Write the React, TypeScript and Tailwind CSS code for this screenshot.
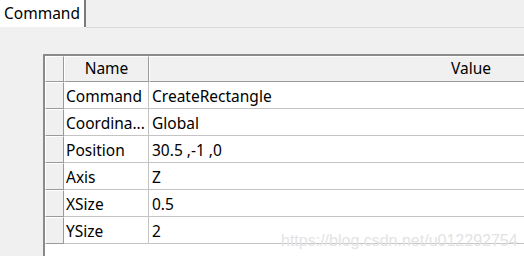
import React from "react";

const rows: [string, string][] = [
  ["Command", "CreateRectangle"],
  ["Coordina...", "Global"],
  ["Position", "30.5 ,-1 ,0"],
  ["Axis", "Z"],
  ["XSize", "0.5"],
  ["YSize", "2"],
];

export default function App() {
  return (
    <div
      className="relative w-[524px] h-[256px] overflow-hidden bg-[#f0f0f0] text-[15.5px] text-black"
      style={{ fontFamily: '"Noto Sans", "Microsoft YaHei", sans-serif' }}
    >
      {/* tab bar */}
      <div className="flex h-[28px]">
        <div className="w-[86px] h-[27px] bg-white border-r-2 border-[#7a7a7a] pl-[4px] leading-[27px]">
          Command
        </div>
        <div className="flex-1 border-b border-[#dadada]" />
      </div>

      {/* table */}
      <div className="mt-[26px] ml-[43px] w-[800px] h-[300px] bg-white border-l-2 border-t-2 border-[#8a8a8a]">
        {/* header */}
        <div className="flex h-[26px] bg-[#f0f0f0]">
          <div className="w-[19px] shrink-0 border-r border-b border-[#9a9a9a] border-l border-l-white border-t border-t-white" />
          <div className="w-[85px] shrink-0 border-r border-b border-[#9a9a9a] border-l border-l-white border-t border-t-white flex items-center justify-center leading-none">
            Name
          </div>
          <div className="w-[644px] shrink-0 border-r border-b border-[#9a9a9a] border-l border-l-white border-t border-t-white flex items-center justify-center leading-none">
            Value
          </div>
        </div>
        {rows.map(([name, value]) => (
          <div key={name} className="flex h-[27px]">
            <div className="w-[19px] shrink-0 bg-[#f0f0f0] border-r border-b border-[#9a9a9a] border-l border-l-white border-t border-t-white" />
            <div className="w-[85px] shrink-0 border-r border-b border-[#c4c4c4] pl-[2px] pt-[4px] flex items-center leading-none whitespace-nowrap overflow-hidden">
              {name}
            </div>
            <div className="w-[644px] shrink-0 border-b border-[#c4c4c4] pl-[3px] pt-[4px] flex items-center leading-none">
              {value}
            </div>
          </div>
        ))}
      </div>

      {/* watermark */}
      <div
        className="absolute left-[281px] top-[229px] text-[16px] text-[#e3e3e3]"
        style={{ fontFamily: '"Liberation Sans", Arial, sans-serif' }}
      >
        https://blog.csdn.net/u012292754
      </div>
    </div>
  );
}
